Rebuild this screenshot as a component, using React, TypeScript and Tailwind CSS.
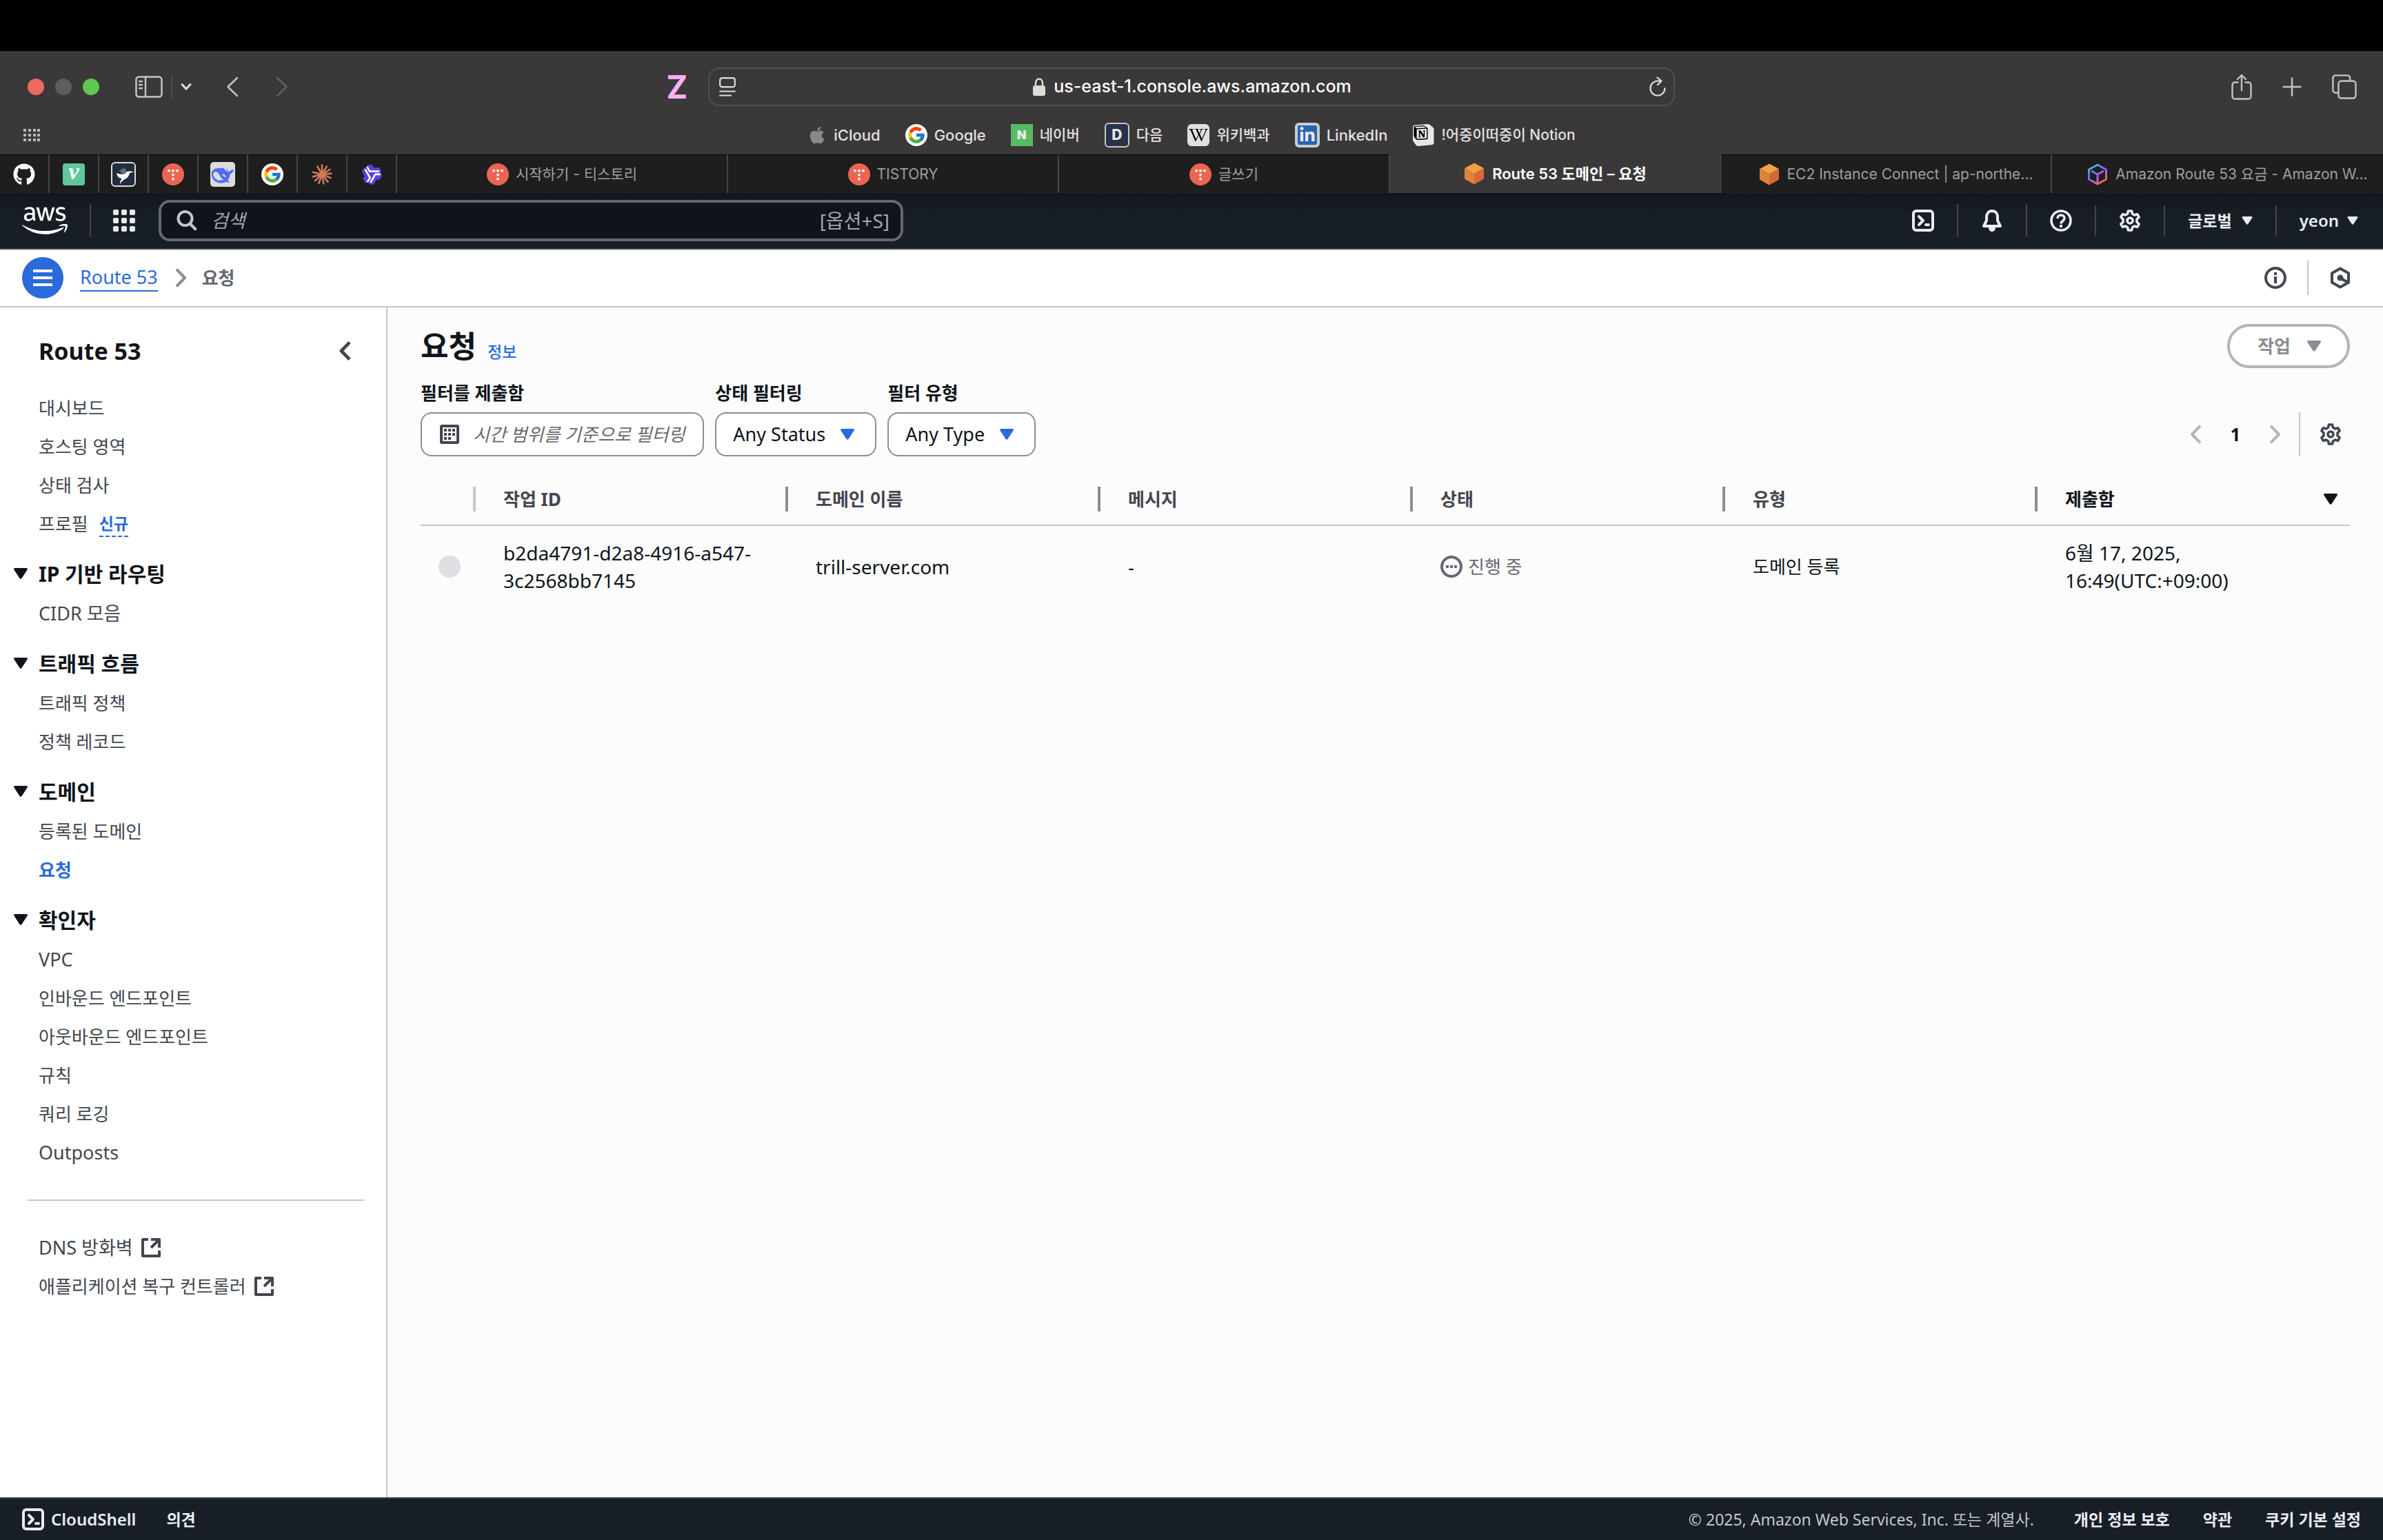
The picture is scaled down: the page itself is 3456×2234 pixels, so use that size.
import React from "react";
import { FaApple, FaAws, FaGithub, FaWikipediaW, FaLinkedinIn } from "react-icons/fa";
import { FcGoogle } from "react-icons/fc";
import { SiNotion } from "react-icons/si";

/* ---------- shared glyphs ---------- */

type IconProps = { className?: string };

function Caret({ className = "" }: IconProps) {
  return (
    <svg viewBox="0 0 20 16" className={className} fill="currentColor" aria-hidden="true">
      <path d="M1.6 0h16.8c1.3 0 2 1.4 1.2 2.5l-8 12.3c-.8 1.2-2.400 1.2-3.2 0L.4 2.5C-.4 1.4.3 0 1.6 0Z" />
    </svg>
  );
}

function Chevron({ className = "", left = false, width = 2 }: IconProps & { left?: boolean; width?: number }) {
  return (
    <svg viewBox="0 0 16 16" className={className} fill="none" stroke="currentColor" strokeWidth={width} strokeLinejoin="round" aria-hidden="true">
      <path d={left ? "M10.5 1.8 4.5 8l6 6.2" : "M5.500 1.8 11.5 8l-6 6.2"} />
    </svg>
  );
}

function ShellIcon({ className = "" }: IconProps) {
  return (
    <svg viewBox="0 0 32 32" className={className} fill="none" stroke="currentColor" strokeWidth="4" strokeLinecap="round" strokeLinejoin="round" aria-hidden="true">
      <rect x="2" y="2" width="28" height="28" rx="4" />
      <path d="m10 10 6 6-6 6M20 22h4" />
    </svg>
  );
}

function BellIcon({ className = "" }: IconProps) {
  return (
    <svg viewBox="0 0 32 32" className={className} fill="none" stroke="currentColor" strokeWidth="4" strokeLinejoin="round" aria-hidden="true">
      <path d="M16 2c-5 0-8 4-8 9v5l-4 8h24l-4-8v-5c0-5-3-9-8-9Z" />
      <path d="M11 26c0 3.500 2 6 5 6s5-2.500 5-6Z" fill="currentColor" stroke="none" />
    </svg>
  );
}

function HelpIcon({ className = "" }: IconProps) {
  return (
    <svg viewBox="0 0 32 32" className={className} fill="none" stroke="currentColor" strokeWidth="3.6" aria-hidden="true">
      <circle cx="16" cy="16" r="14" />
      <path d="M11 13c0-3 2-5 5-5s5 2 5 4.600c0 3.900-5 3.900-5 8" />
      <path d="M16 22v4" strokeWidth="4" />
    </svg>
  );
}

function GearIcon({ className = "" }: IconProps) {
  return (
    <svg viewBox="0 0 32 32" className={className} fill="none" stroke="currentColor" strokeWidth="3.6" strokeLinejoin="round" aria-hidden="true">
      <path d="M13.500 2h5l1 4.200 3 1.700 4.100-1.200 2.500 4.300-3.100 3.100v3.800l3.100 3.100-2.500 4.300-4.100-1.200-3 1.700-1 4.200h-5l-1-4.200-3-1.700-4.100 1.200L2.900 21 6 17.900v-3.800L2.900 11l2.500-4.300 4.100 1.200 3-1.700Z" />
      <circle cx="16" cy="16" r="4" />
    </svg>
  );
}

function ExternalIcon({ className = "" }: IconProps) {
  return (
    <svg viewBox="0 0 28 28" className={className} fill="none" stroke="currentColor" strokeWidth="4" strokeLinejoin="round" aria-hidden="true">
      <path d="M10 2H2v24h24v-8M14 2h12v12M25 3 14 14" />
    </svg>
  );
}

function TistoryIcon() {
  return (
    <svg viewBox="0 0 32 32" className="size-8 shrink-0" aria-hidden="true">
      <circle cx="16" cy="16" r="16" fill="#ec6552" />
      <g fill="#fff">
        <circle cx="10" cy="10.700" r="1.900" />
        <circle cx="16" cy="10.700" r="1.900" />
        <circle cx="22" cy="10.700" r="1.900" />
        <circle cx="16" cy="16.700" r="1.900" />
        <circle cx="16" cy="22.700" r="1.900" />
      </g>
    </svg>
  );
}

function CubeIcon() {
  return (
    <svg viewBox="0 0 32 32" className="size-8 shrink-0" aria-hidden="true">
      <path d="M16 .5 30 8 16 16 2 8Z" fill="#f0a044" />
      <path d="M2 8l14 8v15.500L2 23.500Z" fill="#e3823a" />
      <path d="M30 8l-14 8v15.500l14-8Z" fill="#d66a35" />
    </svg>
  );
}

function AwsCubeIcon() {
  return (
    <svg viewBox="0 0 32 32" className="size-8 shrink-0" fill="none" strokeWidth="3" strokeLinejoin="round" aria-hidden="true">
      <defs>
        <linearGradient id="cubeGradient" x1="0.2" y1="0" x2="0.8" y2="1">
          <stop offset="0" stopColor="#46c3d0" />
          <stop offset="0.3" stopColor="#5b7cf0" />
          <stop offset="0.6" stopColor="#b356e6" />
          <stop offset="1" stopColor="#f0743c" />
        </linearGradient>
      </defs>
      <path stroke="url(#cubeGradient)" d="M16 2 28.500 9v14L16 30 3.500 23V9Zm-9 9 9 5 9-5M16 16v12" />
    </svg>
  );
}

function GoogleIcon() {
  return (
    <span className="flex size-8 items-center justify-center rounded-full bg-white">
      <FcGoogle className="size-7" aria-hidden="true" />
    </span>
  );
}

function BirdIcon() {
  return (
    <svg viewBox="0 0 36 36" className="size-9" aria-hidden="true">
      <rect x="1" y="1" width="34" height="34" rx="5" fill="#222b3f" stroke="#dcdcdc" strokeWidth="2" />
      <path d="m17 17-6-5 4 .5-1-3 4 1.500V7l4 5 1 5Z" fill="#6b7180" />
      <path d="M8 16c4 2 9 2 13 1 1-3 3-4 6-3.500l7 .5-7 2c-1 5-4 8-8 9.500-2 1-4 3.500-6 6.500 0-4 1-6 3-8-5-.5-7-3.500-8-8Z" fill="#fff" />
    </svg>
  );
}

function WhaleIcon() {
  return (
    <svg viewBox="0 0 36 36" className="size-9" aria-hidden="true">
      <rect width="36" height="36" rx="5" fill="#dcdcdd" />
      <path d="M24 8c0 3 1 5 3.500 6.500 1-2.500 3-2.500 6-4.500.3 4-1.500 6.500-5 7.500-.2 4-1.500 7-3.500 9.500 1.500 1 2 1.500 3.500 2-3 1-4.500.6-6-.3-3.500 2-8.500 2.600-13.500.3C3 26 1.500 21 2 16c.6-4 3.500-6.500 7-6.500 2.500-1 4.500-.8 6.500 0 1-.3 1.500-.8 1-1.500 2.500.6 3.600 1.800 4.500 3 2 2 3.500 4 4.500 4.500-2-2-2.500-5-1.500-7.500Z" fill="#4f6bf6" />
      <path d="M4 17c2-4 6-4 8 0 2 3 3.500 6.500 8 9.500-4-.5-6-.3-8 .5-4.500-2-8-5-8-10Z" fill="#dcdcdd" />
      <path d="M17 18c2-1.500 5.500 0 5.500 4.500-2-.5-3.500-2.500-5.500-4.500Z" fill="#dcdcdd" />
    </svg>
  );
}

function BurstIcon() {
  const rays = [0, 30, 58, 84, 112, 142, 170, 200, 228, 256, 284, 330];
  return (
    <svg viewBox="0 0 32 32" className="size-8" stroke="#d07a5b" strokeWidth="2.6" strokeLinecap="round" aria-hidden="true">
      {rays.map((a) => (
        <path key={a} d="M16 16V2.500" transform={`rotate(${a} 16 16)`} />
      ))}
    </svg>
  );
}

function QwenIcon() {
  return (
    <svg viewBox="0 0 32 32" className="size-8" aria-hidden="true">
      {[0, 120, 240].map((a) => (
        <g key={a} transform={`rotate(${a} 16 16)`}>
          <path d="M16 16 7 7l3-5h7l2 4h8l3 5-3 6Z" fill="#5b3fe0" />
        </g>
      ))}
      {[0, 120, 240].map((a) => (
        <path key={a} d="M9.500 5 13 11.500h14" transform={`rotate(${a} 16 16)`} fill="none" stroke="#fff" strokeWidth="2.6" />
      ))}
    </svg>
  );
}

/* ---------- browser chrome ---------- */

function Toolbar() {
  return (
    <div className="grid h-[104px] grid-cols-[1027px_1fr_1027px] items-center">
      <div className="flex items-center pl-10">
        <div className="flex gap-4">
          <button aria-label="닫기" className="size-6 rounded-full bg-[#ed6a5f]" />
          <button aria-label="최소화" className="size-6 rounded-full bg-[#5f5c5d]" />
          <button aria-label="확대" className="size-6 rounded-full bg-[#61c554]" />
        </div>
        <button aria-label="사이드바" className="ml-[52px] text-[#c4c3c3]">
          <svg viewBox="0 0 40 32" className="h-8 w-10" fill="none" stroke="currentColor" strokeWidth="2.5">
            <rect x="1.5" y="1.5" width="37" height="29" rx="4" />
            <path d="M15 2v28M5 8h6M5 13h6M5 18h6" />
          </svg>
        </button>
        <span className="ml-3 h-9 w-0.5 bg-[#4c4a4b]" />
        <button aria-label="탭 그룹" className="ml-3 text-[#e0dfdf]">
          <svg viewBox="0 0 16 12" className="h-3 w-4" fill="none" stroke="currentColor" strokeWidth="3" strokeLinecap="round" strokeLinejoin="round">
            <path d="m2 2.500 6 6.500 6-6.500" />
          </svg>
        </button>
        <button aria-label="뒤로" className="ml-[50px] text-[#c4c3c3]">
          <svg viewBox="0 0 18 30" className="h-[30px] w-[18px]" fill="none" stroke="currentColor" strokeWidth="2.5" strokeLinecap="round" strokeLinejoin="round">
            <path d="M16 2 2.500 15 16 28" />
          </svg>
        </button>
        <button aria-label="앞으로" disabled className="ml-[54px] text-[#626061]">
          <svg viewBox="0 0 18 30" className="h-[30px] w-[18px]" fill="none" stroke="currentColor" strokeWidth="2.5" strokeLinecap="round" strokeLinejoin="round">
            <path d="m2 2 13.500 13L2 28" />
          </svg>
        </button>
        <span className="mr-[30px] ml-auto text-[46px] leading-none font-bold text-[#ffaff5]">Z</span>
      </div>
      <div className="flex h-14 items-center rounded-2xl border-2 border-[#525051] px-3.5">
        <svg viewBox="0 0 24 28" className="h-7 w-6 text-[#e0dfdf]" fill="none" stroke="currentColor" strokeWidth="2.2" strokeLinecap="round" aria-hidden="true">
          <rect x="1.2" y="1.2" width="21.6" height="13" rx="3" />
          <path d="M1.200 20.500h21.600M1.200 26.500H17" />
        </svg>
        <label className="flex flex-1 items-center justify-center gap-3">
          <svg viewBox="0 0 18 26" className="h-[26px] w-[18px] text-[#dddcdc]" aria-hidden="true">
            <rect y="11" width="18" height="15" rx="3" fill="currentColor" />
            <path d="M4 12V7.500C4 4 6 1.500 9 1.500s5 2.500 5 6V12" fill="none" stroke="currentColor" strokeWidth="2.4" />
          </svg>
          <input aria-label="주소" defaultValue="us-east-1.console.aws.amazon.com" className="field-sizing-content bg-transparent text-[25px] font-medium text-white outline-none" />
        </label>
        <button aria-label="새로고침" className="mr-[-4px] text-[#e0dfdf]">
          <svg viewBox="0 0 26 30" className="h-[30px] w-[26px]" fill="none" stroke="currentColor" strokeWidth="2.2" strokeLinecap="round" strokeLinejoin="round">
            <path d="M23.500 17a10.500 10.500 0 1 1-10.500-10.500h5M12.500 1.500l6 5-5.500 5.500" />
          </svg>
        </button>
      </div>
      <div className="flex items-center justify-end gap-11 pr-[38px] text-[#c4c3c3]">
        <button aria-label="공유">
          <svg viewBox="0 0 30 38" className="h-[38px] w-[30px]" fill="none" stroke="currentColor" strokeWidth="2.4" strokeLinecap="round" strokeLinejoin="round">
            <path d="M9.500 12.500H5a3.500 3.500 0 0 0-3.500 3.500v17A3.500 3.500 0 0 0 5 36.500h20a3.500 3.500 0 0 0 3.500-3.500V16a3.500 3.500 0 0 0-3.500-3.500h-4.500M15 24V2M9 8l6-6 6 6" />
          </svg>
        </button>
        <button aria-label="새로운 탭">
          <svg viewBox="0 0 28 28" className="size-7" fill="none" stroke="currentColor" strokeWidth="2.5" strokeLinecap="round">
            <path d="M14 1.500v25M1.500 14h25" />
          </svg>
        </button>
        <button aria-label="탭 개요">
          <svg viewBox="0 0 36 36" className="size-9" fill="none" stroke="currentColor" strokeWidth="2.4">
            <rect x="9.5" y="9.5" width="25" height="25" rx="4" />
            <path d="M9 26.500H5a3.600 3.600 0 0 1-3.600-3.600V5A3.600 3.600 0 0 1 5 1.400h17.500A3.600 3.600 0 0 1 26.100 5v4" />
          </svg>
        </button>
      </div>
    </div>
  );
}

const bookmarks: { name: string; icon: React.ReactNode; latin?: boolean }[] = [
  { name: "iCloud", icon: <FaApple className="size-7 text-[#8a8989]" />, latin: true },
  { name: "Google", icon: <GoogleIcon />, latin: true },
  {
    name: "네이버",
    icon: <span className="flex size-8 items-center justify-center bg-[#57bb63] text-[18px] font-black text-[#e8e8e8]">N</span>,
  },
  {
    name: "다음",
    icon: <span className="flex size-9 items-center justify-center rounded-md border-2 border-[#c8c8ca] bg-[#28324a] text-[21px] font-extrabold text-[#e8e8e8]">D</span>,
  },
  {
    name: "위키백과",
    icon: (
      <span className="flex size-8 items-center justify-center rounded-md bg-[#e0e0e0]">
        <FaWikipediaW className="size-7 text-black" />
      </span>
    ),
  },
  {
    name: "LinkedIn",
    latin: true,
    icon: (
      <span className="flex size-9 items-center justify-center rounded-md border-4 border-[#c9ccd0] bg-[#2b62b3]">
        <FaLinkedinIn className="size-6 text-[#e8e8e8]" />
      </span>
    ),
  },
  {
    name: "!어중이떠중이 Notion",
    icon: (
      <svg viewBox="0 0 32 32" className="size-8">
        <path d="M3 1.500 22 0l3 .5 5.500 4.500 1 2v21l-2 2L8 32l-2-1-5-7V3Z" fill="#e8e8e8" />
        <SiNotion x="2" y="2" width="28" height="28" color="#000" />
      </svg>
    ),
  },
];

function BookmarkBar() {
  return (
    <nav aria-label="책갈피" className="grid h-[46px] grid-cols-[1fr_auto_1fr] pb-4">
      <button aria-label="즐겨찾기 그리드" className="ml-[34px] grid w-6 grid-cols-4 content-center gap-[3px]">
        {Array.from({ length: 12 }, (_, i) => (
          <span key={i} className="size-1 bg-[#b9b8b8]" />
        ))}
      </button>
      <div className="flex items-center gap-9">
        {bookmarks.map((b) => (
          <a
            key={b.name}
            href="#"
            className={"flex items-center gap-2.5 leading-[30px] font-medium whitespace-nowrap text-[#e3e2e2] " + (b.latin ? "text-[22px]" : "text-[21px]")}
          >
            {b.icon}
            {b.name}
          </a>
        ))}
      </div>
      <span />
    </nav>
  );
}

const pinned: { name: string; icon: React.ReactNode }[] = [
  { name: "GitHub", icon: <FaGithub className="size-8 text-white" /> },
  {
    name: "velog",
    icon: <span className="flex size-8 items-center justify-center rounded-sm bg-[#5fc79a] pb-2 font-['Liberation_Serif',serif] text-[34px] leading-none font-bold text-white italic">v</span>,
  },
  { name: "Bird", icon: <BirdIcon /> },
  { name: "티스토리", icon: <TistoryIcon /> },
  { name: "DeepSeek", icon: <WhaleIcon /> },
  { name: "Google", icon: <GoogleIcon /> },
  { name: "Claude", icon: <BurstIcon /> },
  { name: "Qwen", icon: <QwenIcon /> },
];

const tabs: { name: string; icon: React.ReactNode; active?: boolean; long?: boolean }[] = [
  { name: "시작하기 - 티스토리", icon: <TistoryIcon /> },
  { name: "TISTORY", icon: <TistoryIcon /> },
  { name: "글쓰기", icon: <TistoryIcon /> },
  { name: "Route 53 도메인 – 요청", icon: <CubeIcon />, active: true },
  { name: "EC2 Instance Connect | ap-northe...", icon: <CubeIcon />, long: true },
  { name: "Amazon Route 53 요금 - Amazon W...", icon: <AwsCubeIcon />, long: true },
];

function TabBar() {
  return (
    <div role="tablist" className="flex h-14">
      {pinned.map((p) => (
        <button key={p.name} role="tab" aria-label={p.name} className="flex w-[72px] shrink-0 items-center justify-center border-t border-r-2 border-t-black border-r-[#464445] bg-[#1e1e1e]">
          {p.icon}
        </button>
      ))}
      <div className="grid flex-1 grid-cols-6">
        {tabs.map((t) => (
          <button
            key={t.name}
            role="tab"
            aria-selected={!!t.active}
            className={
              "flex min-w-0 items-center justify-center gap-2.5 border-r-2 border-r-[#464445] leading-[34px] whitespace-nowrap last:border-r-0 " +
              (t.active ? "text-[22px] font-semibold text-white " : "border-t border-t-black bg-[#1e1e1e] text-[21px] text-[#a09f9f] ") +
              (t.long ? "pl-7" : "")
            }
          >
            {t.icon}
            {t.name}
          </button>
        ))}
      </div>
    </div>
  );
}

/* ---------- AWS console ---------- */

function ConsoleHeader() {
  return (
    <header className="flex h-[82px] items-center border-b-2 border-[#424650] bg-[#171e26] bg-linear-to-b from-[#12161e] from-0% to-[#171e26] to-40% text-[#ebebf0]">
      <a href="#" aria-label="AWS" className="ml-8 text-white">
        <FaAws className="h-[54px] w-[66px]" />
      </a>
      <span className="ml-8 h-12 w-0.5 bg-[#424650]" />
      <button aria-label="서비스" className="ml-8 grid size-8 grid-cols-3 gap-1">
        {Array.from({ length: 9 }, (_, i) => (
          <span key={i} className="size-2 rounded-[2px] bg-[#ebebf0]" />
        ))}
      </button>
      <label className="ml-[34px] flex h-[60px] w-[1080px] items-center rounded-2xl border-4 border-[#656871] bg-[#0f141a] px-[22px]">
        <svg viewBox="0 0 30 30" className="size-[30px] text-[#c6c6cd]" fill="none" stroke="currentColor" strokeWidth="4" aria-hidden="true">
          <circle cx="12.5" cy="12" r="10" />
          <path d="m19.500 19.500 9 9" />
        </svg>
        <input type="search" aria-label="검색" placeholder="검색" className="ml-5 min-w-0 flex-1 bg-transparent text-[27px] text-white outline-none placeholder:text-[#a4a4ad] placeholder:italic" />
        <span className="mr-[-6px] text-[28px] text-[#a4a4ad]">[옵션+S]</span>
      </label>
      <div className="mr-9 ml-auto flex items-center gap-[33px] text-[24px] font-semibold">
        <button aria-label="CloudShell"><ShellIcon className="size-8" /></button>
        <span className="h-12 w-0.5 bg-[#424650]" />
        <button aria-label="알림"><BellIcon className="size-8" /></button>
        <span className="h-12 w-0.5 bg-[#424650]" />
        <button aria-label="도움말"><HelpIcon className="size-8" /></button>
        <span className="h-11 w-0.5 bg-[#424650]" />
        <button aria-label="설정"><GearIcon className="size-8" /></button>
        <span className="h-11 w-0.5 bg-[#424650]" />
        <button className="flex items-center gap-3.5 text-[23px]">글로벌 <Caret className="h-3 w-4" /></button>
        <span className="h-11 w-0.5 bg-[#424650]" />
        <button className="flex items-center gap-3">yeon <Caret className="h-3 w-4" /></button>
      </div>
    </header>
  );
}

function BreadcrumbBar() {
  return (
    <div className="flex h-[84px] items-center border-b-2 border-[#c6c6cd] bg-white">
      <button aria-label="탐색 열기" className="ml-8 flex size-[60px] flex-col items-center justify-center gap-1.5 rounded-full bg-[#2b6adb]">
        <span className="h-1 w-7 bg-white" />
        <span className="h-1 w-7 bg-white" />
        <span className="h-1 w-7 bg-white" />
      </button>
      <nav aria-label="탐색 경로" className="ml-6 flex items-center text-[27px] leading-10">
        <a href="#" className="border-b-2 border-[#2b6adb] leading-[38px] text-[#2b6adb]">Route 53</a>
        <Chevron className="mx-4 size-8 text-[#8c8c94]" />
        <span className="text-[26px] font-bold text-[#656871]">요청</span>
      </nav>
      <div className="mr-[46px] ml-auto flex items-center text-[#424650]">
        <button aria-label="정보">
          <svg viewBox="0 0 32 32" className="size-8" fill="none" stroke="currentColor" strokeWidth="4">
            <circle cx="16" cy="16" r="14" />
            <path d="M16 14v10M16 8v4" />
          </svg>
        </button>
        <span className="mx-[30px] h-[50px] w-0.5 bg-[#c6c6cd]" />
        <button aria-label="도구">
          <svg viewBox="0 0 32 32" className="size-8" fill="none" stroke="currentColor" strokeWidth="4" strokeLinejoin="round">
            <path d="M16 2.500 28 9.300v13.400L16 29.500 4 22.700V9.300Z" />
            <circle cx="16" cy="16" r="4.5" fill="currentColor" stroke="none" />
            <path d="m17 17 9 5" />
          </svg>
        </button>
      </div>
    </div>
  );
}

type NavItemProps = { children: React.ReactNode; active?: boolean; external?: boolean; latin?: boolean };

function NavItem({ children, active = false, external = false, latin = false }: NavItemProps) {
  return (
    <li className="flex h-14 items-center">
      <a href="#" className={"flex items-center gap-3 " + (latin ? "text-[27px] " : "text-[26px] ") + (active ? "font-bold text-[#2b6adb]" : "text-[#424650]")}>
        {children}
        {external && <ExternalIcon className="size-7" />}
      </a>
    </li>
  );
}

function NavSection({ title, children }: { title: string; children: React.ReactNode }) {
  return (
    <section>
      <h3 className="mt-3.5">
        <button aria-expanded="true" className="flex h-[60px] items-center gap-4 text-[30px] font-bold text-[#0f141a]">
          <Caret className="h-4 w-5" />
          {title}
        </button>
      </h3>
      <ul className="pl-9">{children}</ul>
    </section>
  );
}

function Sidebar() {
  return (
    <aside className="w-[562px] shrink-0 border-r-2 border-[#c6c6cd] bg-white pl-5">
      <div className="flex h-[118px] items-center justify-between pt-2 pr-[42px] pl-9">
        <h2 className="text-[34px] font-bold text-[#0f141a]">Route 53</h2>
        <button aria-label="탐색 닫기" className="text-[#424650]">
          <Chevron left width={2.4} className="size-8" />
        </button>
      </div>
      <ul className="pl-9">
        <NavItem>대시보드</NavItem>
        <NavItem>호스팅 영역</NavItem>
        <NavItem>상태 검사</NavItem>
        <NavItem>
          프로필
          <span className="ml-1 border-b-2 border-dashed border-[#2b6adb] text-[23px] leading-9 font-bold text-[#2b6adb]">신규</span>
        </NavItem>
      </ul>
      <NavSection title="IP 기반 라우팅">
        <NavItem latin>CIDR 모음</NavItem>
      </NavSection>
      <NavSection title="트래픽 흐름">
        <NavItem>트래픽 정책</NavItem>
        <NavItem>정책 레코드</NavItem>
      </NavSection>
      <NavSection title="도메인">
        <NavItem>등록된 도메인</NavItem>
        <NavItem active>요청</NavItem>
      </NavSection>
      <NavSection title="확인자">
        <NavItem latin>VPC</NavItem>
        <NavItem>인바운드 엔드포인트</NavItem>
        <NavItem>아웃바운드 엔드포인트</NavItem>
        <NavItem>규칙</NavItem>
        <NavItem>쿼리 로깅</NavItem>
        <NavItem latin>Outposts</NavItem>
      </NavSection>
      <hr className="mt-10 mr-8 mb-10 ml-5 border-t-2 border-[#c6c6cd]" />
      <ul className="pl-9">
        <NavItem external latin>DNS 방화벽</NavItem>
        <NavItem external>애플리케이션 복구 컨트롤러</NavItem>
      </ul>
    </aside>
  );
}

function FilterSelect({ id, label, value }: { id: string; label: string; value: string }) {
  return (
    <div>
      <label htmlFor={id} className="block text-[26px] leading-10 font-bold text-[#0f141a]">{label}</label>
      <div className="relative mt-2">
        <select id={id} className="h-16 appearance-none rounded-2xl border-2 border-[#8c8c94] bg-white pr-[72px] pl-6 text-[27px] text-[#0f141a]">
          <option>{value}</option>
        </select>
        <Caret className="pointer-events-none absolute top-6 right-8 h-4 w-5 text-[#2b6adb]" />
      </div>
    </div>
  );
}

function CalendarIcon() {
  return (
    <svg viewBox="0 0 28 28" className="size-7 text-[#424650]" fill="none" stroke="currentColor" aria-hidden="true">
      <rect x="2" y="2" width="24" height="24" strokeWidth="4" rx="1" />
      <path strokeWidth="4" strokeDasharray="4 2" d="M6 8h16M6 14h16M6 20h10" />
    </svg>
  );
}

const columns = ["작업 ID", "도메인 이름", "메시지", "상태", "유형"];

function RequestsTable() {
  return (
    <table className="mt-6 w-full table-fixed border-collapse text-left text-[28px] leading-10 text-[#0f141a]">
      <thead className="border-b-2 border-[#c6c6cd] text-[26px]">
        <tr className="h-[76px]">
          <th className="w-20 p-0" aria-label="선택">
            <span className="ml-auto block h-9 w-1 bg-[#c6c6cd]" />
          </th>
          {columns.map((c) => (
            <th key={c} scope="col" className="p-0 font-bold text-[#424650]">
              <div className="flex items-center justify-between pl-10">
                {c}
                <span className="h-9 w-1 bg-[#8c8c94]" />
              </div>
            </th>
          ))}
          <th scope="col" aria-sort="descending" className="p-0 font-bold">
            <button className="flex w-full items-center justify-between pr-[18px] pl-10">
              제출함
              <Caret className="h-4 w-5" />
            </button>
          </th>
        </tr>
      </thead>
      <tbody>
        <tr className="h-[118px]">
          <td className="p-0 pl-[26px]">
            <input type="radio" name="request" disabled aria-label="b2da4791 선택" className="block size-8 appearance-none rounded-full bg-[#dedee3]" />
          </td>
          <td className="p-0 pl-10">b2da4791-d2a8-4916-a547-<br />3c2568bb7145</td>
          <td className="p-0 pl-10">trill-server.com</td>
          <td className="p-0 pl-10">-</td>
          <td className="p-0 pl-10">
            <span className="flex items-center gap-2 text-[26px] text-[#656871]">
              <svg viewBox="0 0 32 32" className="size-8" fill="none" stroke="currentColor" strokeWidth="4" aria-hidden="true">
                <circle cx="16" cy="16" r="14" />
                <path strokeDasharray="4 2" d="M8 16h16" />
              </svg>
              진행 중
            </span>
          </td>
          <td className="p-0 pl-10 text-[26px]">도메인 등록</td>
          <td className="p-0 pl-10">6월 17, 2025,<br />16:49(UTC:+09:00)</td>
        </tr>
      </tbody>
    </table>
  );
}

function Main() {
  return (
    <main className="min-w-0 flex-1 bg-[#fcfcfd] pt-6 pr-12 pl-12">
      <div className="flex items-center justify-between">
        <div className="flex items-baseline gap-4">
          <h1 className="text-[44px] leading-[64px] font-bold text-[#0f141a]">요청</h1>
          <a href="#" className="text-[23px] font-medium text-[#2b6adb]">정보</a>
        </div>
        <button disabled className="flex h-16 items-center gap-6 rounded-full border-4 border-[#b4b4bb] bg-white pr-[38px] pl-10 text-[26px] font-bold text-[#8c8c94]">
          작업 <Caret className="h-4 w-5" />
        </button>
      </div>
      <div className="mt-4 flex items-end justify-between">
        <div className="flex gap-4">
          <div>
            <label htmlFor="range" className="block text-[26px] leading-10 font-bold text-[#0f141a]">필터를 제출함</label>
            <button id="range" className="mt-2 flex h-16 items-center gap-5 rounded-2xl border-2 border-[#8c8c94] bg-white px-[26px] text-[26px] text-[#656871] italic">
              <CalendarIcon />
              시간 범위를 기준으로 필터링
            </button>
          </div>
          <FilterSelect id="status" label="상태 필터링" value="Any Status" />
          <FilterSelect id="type" label="필터 유형" value="Any Type" />
        </div>
        <div className="mr-3 flex h-16 items-center text-[#b4b4bb]">
          <button aria-label="이전 페이지" disabled><Chevron left className="size-8" /></button>
          <button aria-current="page" className="w-20 text-center text-[26px] font-bold text-[#0f141a]">1</button>
          <button aria-label="다음 페이지" disabled><Chevron className="size-8" /></button>
          <span className="mr-7 ml-5 h-16 w-0.5 bg-[#c6c6cd]" />
          <button aria-label="기본 설정" className="text-[#424650]"><GearIcon className="size-8" /></button>
        </div>
      </div>
      <RequestsTable />
    </main>
  );
}

function Footer() {
  return (
    <footer className="flex h-[62px] items-center border-t-2 border-[#424650] bg-[#171e26] px-8 text-[23px] font-semibold text-[#ebebf0]">
      <button className="flex items-center gap-2.5 text-[24px]"><ShellIcon className="size-8" />CloudShell</button>
      <a href="#" className="ml-11">의견</a>
      <p className="mr-[58px] ml-auto font-normal text-[#c6c6cd]">© 2025, Amazon Web Services, Inc. 또는 계열사.</p>
      <div className="flex gap-12">
        <a href="#">개인 정보 보호</a>
        <a href="#">약관</a>
        <a href="#">쿠키 기본 설정</a>
      </div>
    </footer>
  );
}

export default function App() {
  return (
    <div className="flex min-h-screen flex-col bg-white font-['Noto_Sans','Noto_Sans_CJK_KR',sans-serif]">
      <div className="h-[74px] bg-black" />
      <div className="bg-[#3a3838] font-['Inter','Noto_Sans_CJK_KR',sans-serif]">
        <Toolbar />
        <BookmarkBar />
        <TabBar />
      </div>
      <ConsoleHeader />
      <BreadcrumbBar />
      <div className="flex flex-1">
        <Sidebar />
        <Main />
      </div>
      <Footer />
    </div>
  );
}
